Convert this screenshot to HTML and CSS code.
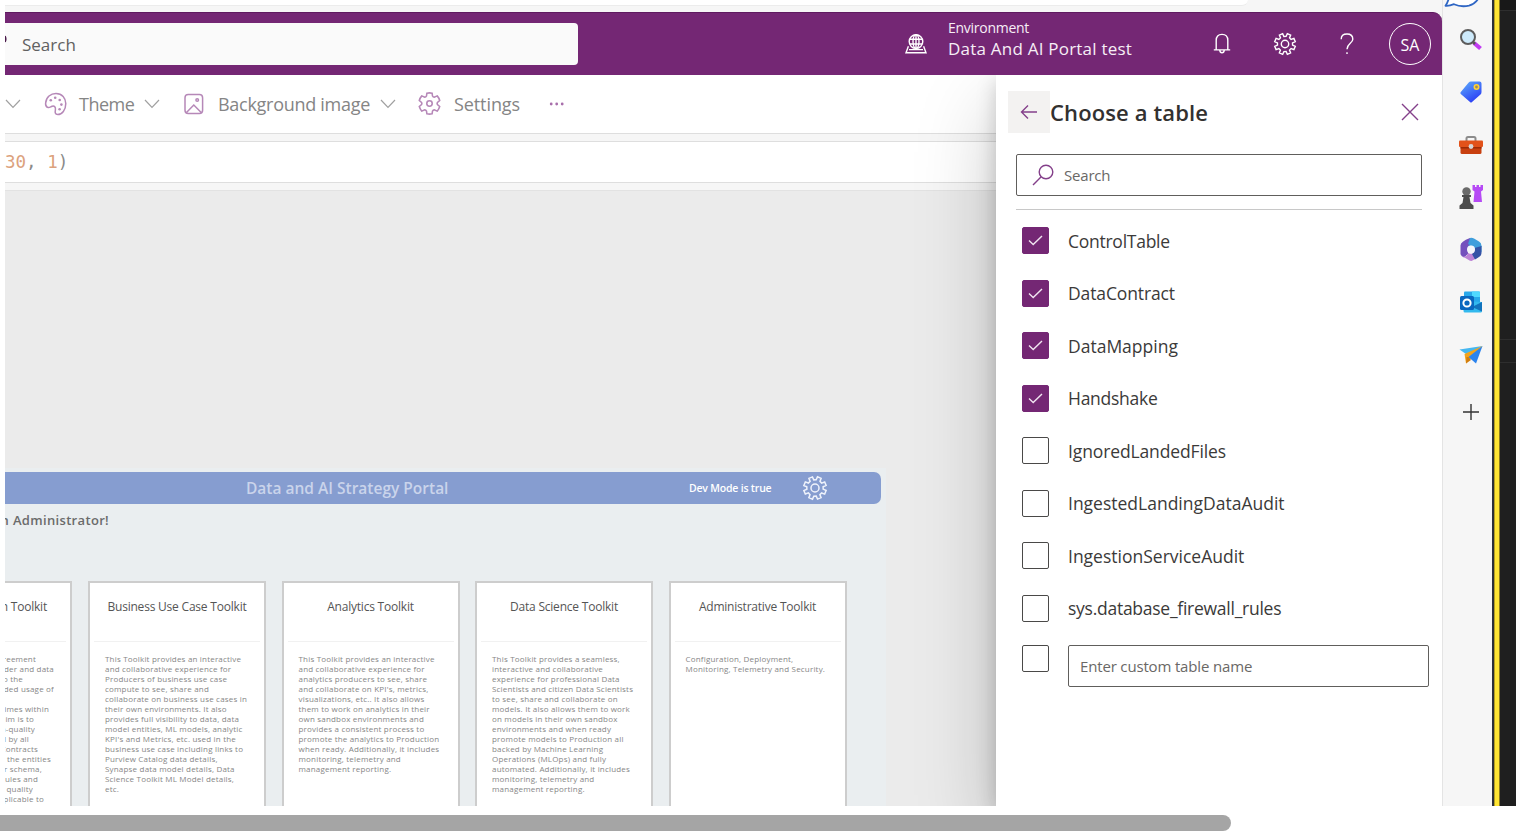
FILE: index.html
```html
<!DOCTYPE html>
<html lang="en">
<head>
<meta charset="utf-8">
<title>Power Apps</title>
<link rel="stylesheet" href="styles.css">
</head>
<body>
<svg class="defs" aria-hidden="true">
  <symbol id="gear8" viewBox="-12 -12 24 24"><g transform="rotate(22.5)"><path d="M7.4-1.9L10.4-1.8V1.8L7.4 1.9L6.5 3.9L8.6 6.1L6.1 8.6L3.9 6.5L1.9 7.4L1.8 10.4H-1.8L-1.9 7.4L-3.9 6.5L-6.1 8.6L-8.6 6.1L-6.5 3.9L-7.4 1.9L-10.4 1.8V-1.8L-7.4-1.9L-6.5-3.9L-8.6-6.1L-6.1-8.6L-3.9-6.5L-1.9-7.4L-1.8-10.4H1.8L1.9-7.4L3.9-6.5L6.1-8.6L8.6-6.1L6.5-3.9Z"/></g><circle r="3.7"/></symbol>
  <symbol id="gear6" viewBox="-12 -12 24 24"><path d="M9.8 2.9L7.6 1Q7 0 7.6-1L9.8-2.9Q9.1-5.4 7.4-7.3L4.6-6.1Q3.4-6.1 2.9-7.2L2.5-9.9Q0-10.5-2.5-9.9L-2.9-7.2Q-3.4-6.1-4.6-6.1L-7.4-7.3Q-9.1-5.4-9.8-2.9L-7.6-1Q-7 0-7.6 1L-9.8 2.9Q-9.1 5.4-7.4 7.3L-4.6 6.1Q-3.4 6.1-2.9 7.2L-2.5 9.9Q0 10.5 2.5 9.9L2.9 7.2Q3.4 6.1 4.6 6.1L7.4 7.3Q9.1 5.4 9.8 2.9Z"/><circle r="2.6"/></symbol>
  <symbol id="chev" viewBox="0 0 16 10"><path d="M1 1L8 8.3L15 1"/></symbol>
</svg>

<div class="stage">
  <div class="page">
    <div class="browser-bar"><div class="address"></div></div>
    <header class="topbar">
      <div class="global-search">
        <svg class="lens-edge" width="5" height="14" viewBox="0 0 5 14"><path d="M0 1Q1.5 4 0 7" /></svg>
        <span>Search</span>
      </div>
      <div class="environment">
        <svg class="line-icon" width="22" height="20" viewBox="0 0 22 20"><circle cx="11" cy="7.6" r="6.8"/><ellipse cx="11" cy="7.6" rx="3" ry="6.8"/><path d="M4.8 5.2H17.2M4.8 10H17.2M11 .8V14.4M3.4 12.2L1 18.8H21L18.6 12.2M4 15.6H18"/></svg>
        <div class="env-text"><span class="env-label">Environment</span><span class="env-name">Data And AI Portal test</span></div>
      </div>
      <div class="top-actions">
        <svg class="line-icon" width="18" height="22" viewBox="0 0 18 22"><path d="M3.2 16.8V7.4Q3.2 1.4 9 1.4T14.8 7.4V16.8M.8 16.9H17.2M6.8 17.4Q7 19.8 9 19.8T11.2 17.4"/></svg>
        <svg class="line-icon gear" width="24" height="24"><use href="#gear8"/></svg>
        <svg class="line-icon" width="14" height="22" viewBox="0 0 14 22"><path d="M1.2 6.2Q1.2 1 7 1T12.8 6.2C12.8 10.2 7 10.6 7 16.2M7 19.2V21"/></svg>
        <div class="avatar">SA</div>
      </div>
    </header>

    <div class="workspace">
      <main class="studio">
        <div class="toolbar">
          <svg class="chev" width="16" height="10"><use href="#chev"/></svg>
          <svg class="tool-icon palette" width="23" height="24" viewBox="0 0 23 24"><path d="M1.6 11.2C2 5 6.800 1.400 12 1.400C18 1.400 21.800 6 21.800 11.600C21.800 18 18 22.600 13.800 22.600C10.800 22.600 11 20 11.400 17.800C11.800 15.400 10.400 13.400 8.200 14.200C5.600 15.400 5.200 16 3.600 15.400C1.800 14.600 1.500 12.800 1.600 11.200Z"/><g class="dots"><circle cx="6.800" cy="8.200" r="1.300"/><circle cx="11.200" cy="5.700" r="1.300"/><circle cx="15.700" cy="8" r="1.300"/><circle cx="17.400" cy="12.600" r="1.300"/><circle cx="15.600" cy="17.200" r="1.300"/></g></svg>
          <span class="tool t-theme">Theme</span>
          <svg class="chev" width="16" height="10"><use href="#chev"/></svg>
          <svg class="tool-icon picture" width="20" height="22" viewBox="0 0 20 22"><rect x="1" y="1.500" width="17.600" height="19" rx="3.200"/><path d="M2.500 19.500L9.800 12L17.200 19.500"/><circle cx="13.200" cy="7" r="1.300"/></svg>
          <span class="tool t-bg">Background image</span>
          <svg class="chev" width="16" height="10"><use href="#chev"/></svg>
          <svg class="tool-icon cog" width="25" height="25"><use href="#gear6"/></svg>
          <span class="tool t-set">Settings</span>
          <svg class="more" width="16" height="4" viewBox="0 0 16 4"><circle cx="2.200" cy="2" r="1.400"/><circle cx="7.700" cy="2" r="1.400"/><circle cx="13.200" cy="2" r="1.400"/></svg>
        </div>
        <div class="formula"><span class="num">30</span>, <span class="num">1</span>)</div>
        <div class="canvas">
          <div class="app">
            <div class="app-bar">
              <span class="app-title">Data and AI Strategy Portal</span>
              <span class="dev-mode">Dev Mode is true</span>
              <svg class="app-gear" width="26" height="26"><use href="#gear8"/></svg>
            </div>
            <div class="welcome"><span>n Administrator!</span></div>
            <div class="cards">
              <article class="card first">
                <h3>n Toolkit</h3>
                <div class="cut">
                  <span style="width:31px">reement</span><span style="width:49px">der and data</span><span style="width:18px">o the</span><span style="width:49px">ded usage of</span><span style="width:0">&nbsp;</span><span style="width:44px">imes within</span><span style="width:29px">im is to</span><span style="width:30px">n-quality</span><span style="width:24px">l by all</span><span style="width:33px">Contracts</span><span style="width:46px">the entities</span><span style="width:37px">r schema,</span><span style="width:33px">rules and</span><span style="width:28px">quality</span><span style="width:39px">plicable to</span>
                </div>
              </article>
              <article class="card">
                <h3>Business Use Case Toolkit</h3>
                <p>This Toolkit provides an interactive<br>and collaborative experience for<br>Producers of business use case<br>compute to see, share and<br>collaborate on business use cases in<br>their own environments. It also<br>provides full visibility to data, data<br>model entities, ML models, analytic<br>KPI's and Metrics, etc. used in the<br>business use case including links to<br>Purview Catalog data details,<br>Synapse data model details, Data<br>Science Toolkit ML Model details,<br>etc.</p>
              </article>
              <article class="card">
                <h3>Analytics Toolkit</h3>
                <p>This Toolkit provides an interactive<br>and collaborative experience for<br>analytics producers to see, share<br>and collaborate on KPI's, metrics,<br>visualizations, etc.. It also allows<br>them to work on analytics in their<br>own sandbox environments and<br>provides a consistent process to<br>promote the analytics to Production<br>when ready. Additionally, it includes<br>monitoring, telemetry and<br>management reporting.</p>
              </article>
              <article class="card">
                <h3>Data Science Toolkit</h3>
                <p>This Toolkit provides a seamless,<br>interactive and collaborative<br>experience for professional Data<br>Scientists and citizen Data Scientists<br>to see, share and collaborate on<br>models. It also allows them to work<br>on models in their own sandbox<br>environments and when ready<br>promote models to Production all<br>backed by Machine Learning<br>Operations (MLOps) and fully<br>automated. Additionally, it includes<br>monitoring, telemetry and<br>management reporting.</p>
              </article>
              <article class="card">
                <h3>Administrative Toolkit</h3>
                <p>Configuration, Deployment,<br>Monitoring, Telemetry and Security.</p>
              </article>
            </div>
          </div>
        </div>
      </main>

      <aside class="panel">
        <div class="panel-head">
          <button class="back" aria-label="Back"><svg width="18" height="16" viewBox="0 0 18 16"><path d="M17 8H1.500M8 1.500L1.500 8L8 14.500"/></svg></button>
          <h2>Choose a table</h2>
          <svg class="close" width="18" height="18" viewBox="0 0 18 18"><path d="M1 1L17 17M17 1L1 17"/></svg>
        </div>
        <div class="table-search">
          <svg width="22" height="22" viewBox="0 0 22 22"><circle cx="14" cy="8" r="6.800"/><path d="M9.200 12.800L1 21"/></svg>
          <span>Search</span>
        </div>
        <ul class="tables">
          <li><i class="box on"><svg width="15" height="11" viewBox="0 0 15 11"><path d="M1 5.500L5.200 9.500L14 1"/></svg></i><span class="tight">ControlTable</span></li>
          <li><i class="box on"><svg width="15" height="11" viewBox="0 0 15 11"><path d="M1 5.500L5.200 9.500L14 1"/></svg></i><span class="snug">DataContract</span></li>
          <li><i class="box on"><svg width="15" height="11" viewBox="0 0 15 11"><path d="M1 5.500L5.200 9.500L14 1"/></svg></i><span>DataMapping</span></li>
          <li><i class="box on"><svg width="15" height="11" viewBox="0 0 15 11"><path d="M1 5.500L5.200 9.500L14 1"/></svg></i><span class="tight">Handshake</span></li>
          <li><i class="box"></i><span class="snug">IgnoredLandedFiles</span></li>
          <li><i class="box"></i><span>IngestedLandingDataAudit</span></li>
          <li><i class="box"></i><span>IngestionServiceAudit</span></li>
          <li><i class="box"></i><span class="tight">sys.database_firewall_rules</span></li>
          <li class="custom"><i class="box"></i><div class="custom-name">Enter custom table name</div></li>
        </ul>
      </aside>
    </div>
  </div>

  <nav class="sidebar">
    <div class="cell bubble"><svg width="38" height="9" viewBox="0 0 38 9"><path d="M6 -2Q4.500 3 2.500 5.800Q6 6.200 11 4.200Q18 7.400 26 5.600Q32 4 35-1" fill="#fff" stroke="#2f66c4" stroke-width="1.800" stroke-linejoin="round"/></svg></div>
    <div class="cell"><svg width="24" height="24" viewBox="0 0 24 24"><path d="M15 15L21.500 20.500" stroke="#c13bf2" stroke-width="4.200"/><path d="M13.500 13.500L16 16" stroke="#555" stroke-width="2.500"/><circle cx="9" cy="9" r="7" fill="#cdeafb" stroke="#5c5c5c" stroke-width="2"/></svg></div>
    <div class="cell"><svg width="24" height="24" viewBox="0 0 24 24"><defs><linearGradient id="tag" x1="0" y1="0" x2=".6" y2="1"><stop offset="0" stop-color="#5fb0fb"/><stop offset="1" stop-color="#2b3ff5"/></linearGradient></defs><path d="M12 1.500H20.500Q22.500 1.500 22.500 3.500V12Q22.500 13.500 21.500 14.500L13 22Q12 23 11 22L1.800 14Q.8 13 1.800 12L9.500 2.800Q10.500 1.500 12 1.500Z" fill="url(#tag)"/><circle cx="17.500" cy="7" r="2.200" fill="#9d8a60" stroke="#ffd335" stroke-width="1.600"/></svg></div>
    <div class="cell low"><svg width="26" height="20" viewBox="0 0 26 20"><path d="M8.500 6V3.500Q8.500 2 10 2H16Q17.500 2 17.500 3.500V6" fill="none" stroke="#8b8b8b" stroke-width="2"/><rect x="2.500" y="9" width="21" height="10" rx="1.500" fill="#c8400f"/><rect x="1" y="5.500" width="24" height="6.500" rx="1" fill="#e2521a"/><rect x="2.500" y="12" width="21" height="1.500" fill="#9c2b06"/><circle cx="13" cy="11.500" r="2.400" fill="#d6d6d6"/></svg></div>
    <div class="cell"><svg width="26" height="26" viewBox="0 0 26 26"><path d="M14.500 1V6L16.500 7.500L15.500 18H24L23 7.500L25 6V1H22.500V3H21V1H18.500V3H17V1Z" fill="#b64af5"/><circle cx="8.500" cy="7.500" r="4.200" fill="#6a6a6a"/><path d="M4 11H13V13H11.500L12.500 19L15.500 21.500V25H1.500V21.500L4.500 19L5.500 13H4Z" fill="#4c4c4c"/></svg></div>
    <div class="cell"><svg width="24" height="25" viewBox="0 0 24 25"><path d="M11 1.500L20 5.500Q22.500 7 22.500 10V15L15.500 12Q15.500 8.500 12 8.500L5 12Z" fill="#35a5dc"/><path d="M11 1Q1.500 4.500 1.500 8.500V17Q2 19 5 20.500L9 17V9L15 6V2.500Q13 .5 11 1Z" fill="#7450bd"/><path d="M11 1Q13 .5 15 1.600L20 4.600Q22.500 6 22.500 9V10L15.500 11Q14 8.500 12 8.500L9 7Z" fill="#3f9fdc"/><path d="M3 19Q8 21 9 16Q12 17.500 15 16L19 20.500L13 23.700Q12 24.200 10.500 23.600Z" fill="#bd83d6"/><path d="M15.500 11L22.500 9V16Q22.500 18.500 20 20L16 22.500L13 17Q16 15 15.500 11Z" fill="#3453a6"/><circle cx="12" cy="12.500" r="4" fill="#f4f6fb"/></svg></div>
    <div class="cell"><svg width="24" height="24" viewBox="0 0 24 24"><path d="M5 2.500Q5 1.500 6 1.500H20Q21 1.500 21 2.500V12H5Z" fill="#28a8ea"/><path d="M13 1.500H20Q21 1.500 21 2.500V7H13Z" fill="#50d9ff"/><path d="M4.500 11L23 12V21Q23 22.500 21.500 22.500H6Q4.500 22.500 4.500 21Z" fill="#32b9ee"/><path d="M23 12V21.500L13 17Z" fill="#1173bd"/><rect x="1" y="6" width="14" height="14" rx="1.500" fill="#0a67bf"/><circle cx="8" cy="13" r="3.600" fill="none" stroke="#fff" stroke-width="2"/></svg></div>
    <div class="cell"><svg width="24" height="20" viewBox="0 0 24 20"><path d="M.5 4.500L23.500 1L8.500 10Z" fill="#45b7f0"/><path d="M5.500 9L23.500 1L7 18.500Z" fill="#f2a31b"/><path d="M9.500 12L23.500 1L17 18.500Z" fill="#2b84ee"/><path d="M7.500 12L9.500 12L12 15L7 18.500Z" fill="#d17d0d"/></svg></div>
    <div class="cell plus"><svg width="16" height="16" viewBox="0 0 16 16"><path d="M8 0V16M0 8H16" stroke="#333" stroke-width="1.400"/></svg></div>
  </nav>
  <div class="frame"></div>
  <div class="desktop"><div class="d-top"></div><div class="d-mid"></div><div class="d-band"></div></div>
</div>
<div class="scrollbar"></div>
</body>
</html>
```
FILE: styles.css
```css
* { box-sizing: border-box; }
body {
  margin: 0;
  width: 1516px;
  height: 833px;
  overflow: hidden;
  background: #fff;
  font-family: "Open Sans", "Noto Sans", sans-serif;
  white-space: nowrap;
}
svg { display: block; flex: none; }
.defs { position: absolute; width: 0; height: 0; }
h2, h3, p, ul { margin: 0; padding: 0; }

.stage { display: flex; height: 806px; margin-left: 5px; overflow: hidden; }
.page { display: flex; flex-direction: column; width: 1437px; flex: none; background: #f6f6f6; }

.browser-bar { height: 12px; flex: none; }
.address { width: 1243px; height: 6px; background: #fff; border-bottom: 1px solid #ececec; border-radius: 0 0 14px 0; }

.topbar {
  display: flex;
  align-items: center;
  height: 63px;
  flex: none;
  background: #742774;
  border-top: 1px solid #5f1a60;
  border-radius: 0 9px 0 0;
  color: #fff;
}
.global-search {
  display: flex;
  align-items: center;
  width: 573px;
  height: 42px;
  flex: none;
  background: #fafafa;
  border-radius: 0 4px 4px 0;
  color: #616161;
  font-size: 17px;
}
.global-search span { margin-left: 12px; }
.lens-edge { fill: none; stroke: #4a1a4a; stroke-width: 1.6; margin-top: -4px; }
.line-icon { fill: none; stroke: #fff; stroke-width: 1.4; }
.environment { display: flex; align-items: center; flex: none; margin-left: 327px; width: 240px; }
.env-text { display: flex; flex-direction: column; margin: -10px 0 0 21px; }
.env-label { font-size: 14px; line-height: 20px; letter-spacing: -.27px; }
.env-name { font-size: 17px; line-height: 22px; letter-spacing: .22px; }
.env-text span { color: #f6eef6; }
.top-actions { display: flex; align-items: center; flex: none; margin-left: 67.500px; }
.top-actions .gear { margin: 0 43.500px 0 42px; }
.avatar {
  width: 42px;
  height: 42px;
  margin-left: 35px;
  border: 1px solid #fff;
  border-radius: 50%;
  font-size: 16px;
  line-height: 43px;
  text-align: center;
}

.workspace { display: flex; flex: 1; overflow: hidden; }
.studio { display: flex; flex-direction: column; width: 991px; flex: none; background: #f6f6f6; }
.toolbar {
  display: flex;
  align-items: center;
  height: 58.500px;
  flex: none;
  background: #fff;
  border-bottom: 1px solid #dedede;
  color: #858585;
  font-size: 18px;
}
.chev { fill: none; stroke: #a0a0a0; stroke-width: 1.2; }
.tool-icon { fill: none; stroke: #b688b8; stroke-width: 1.5; }
.tool-icon .dots { fill: #b688b8; stroke: none; }
.palette { margin-left: 23px; }
.picture { margin-left: 24px; }
.cog { margin-left: 21px; }
.tool { margin-left: 12px; }
.t-theme { width: 65px; letter-spacing: -.5px; }
.t-bg { margin-left: 14px; width: 162px; letter-spacing: -.28px; }
.t-set { margin-left: 12px; width: 95px; letter-spacing: -.09px; }
.more { fill: #a86fab; }
.formula {
  height: 42.500px;
  flex: none;
  margin-top: 7px;
  background: #fff;
  border: solid #dedede;
  border-width: 1px 0;
  font: 17.500px/41px "DejaVu Sans Mono", monospace;
  color: #8a8a8a;
}
.num { color: #dca27d; }
.canvas { display: flex; flex: 1; min-height: 0; margin-top: 6.500px; padding-top: 277px; background: #ebebeb; border-top: 1px solid #e2e2e2; }
.app { width: 881px; background: #eaeef0; padding-top: 4.500px; display: flex; flex-direction: column; overflow: hidden; }
.app-bar {
  display: flex;
  align-items: center;
  width: 876px;
  height: 31.500px;
  flex: none;
  background: #869dd0;
  border-radius: 0 7px 7px 0;
}
.app-title { width: 443px; margin-left: 241px; font-size: 15.500px; color: #cad4eb; font-weight: 600; }
.dev-mode { width: 113px; font-size: 10.500px; letter-spacing: -.2px; font-weight: 600; color: #fff; }
.app-gear { fill: none; stroke: #eef2fb; stroke-width: 1.4; }
.welcome { display: flex; justify-content: flex-end; flex: none; width: 104px; height: 77px; font-size: 13px; line-height: 32px; font-weight: 600; letter-spacing: .33px; color: #6b6b6b; }
.cards { display: flex; gap: 15.500px; flex: 1; min-height: 0; }
.card { width: 178px; height: 300px; flex: none; border: 2px solid #cdcdcd; background: #fff; }
.card h3 {
  height: 59px;
  margin: 0 4px;
  border-bottom: 1px solid #f1f1f1;
  font-size: 12px;
  line-height: 47px;
  font-weight: 400;
  letter-spacing: -.21px;
  text-align: center;
  color: #555;
}
.card p, .cut { padding: 12px 0 0 15px; font-size: 8px; line-height: 10.030px; letter-spacing: .19px; color: #868686; }
.first { width: 67px; margin-right: .500px; border-left: 0; }
.first h3 { display: flex; justify-content: flex-end; margin-left: 0; padding-right: 19px; }
.cut { display: flex; flex-direction: column; padding-left: 0; }
.cut span { display: flex; justify-content: flex-end; overflow: hidden; height: 10.030px; }

.panel {
  position: relative;
  width: 446px;
  flex: none;
  background: #fff;
  box-shadow: 0 33px 75px rgba(0, 0, 0, .22), 0 6px 19px rgba(0, 0, 0, .18);
  color: #3b3a39;
}
.panel-head { display: flex; align-items: center; height: 42px; margin: 16px 23px 0 12px; }
.back { width: 42px; height: 42px; padding: 0; border: 0; background: #f3f2f1; display: grid; place-items: center; }
.back svg, .close, .table-search svg { fill: none; stroke: #84408a; stroke-width: 1.4; }
.panel h2 { flex: 1; font-size: 22px; line-height: 42px; font-weight: 600; letter-spacing: .12px; color: #323130; }
.table-search {
  display: flex;
  align-items: center;
  height: 42px;
  margin: 21px 20px 0;
  padding-left: 15px;
  border: 1px solid #605e5c;
  border-radius: 2px;
  font-size: 15px;
  letter-spacing: -.2px;
  color: #6a6866;
}
.table-search svg { margin-right: 10px; }
.tables { list-style: none; margin: 13px 20px 0; padding-top: 4.500px; border-top: 1px solid #c8c8c8; }
.tables li { display: flex; align-items: center; height: 52.500px; padding-left: 6px; font-size: 17.500px; }
.box { width: 27px; height: 27px; flex: none; margin-right: 19px; border: 1.500px solid #4a4948; border-radius: 2px; display: grid; place-items: center; }
.box.on { background: #742774; border-color: #742774; }
.box svg { fill: none; stroke: #f0e4f0; stroke-width: 1.4; }
.snug { letter-spacing: -.12px; }
.tight { letter-spacing: -.26px; }
.tables .custom { align-items: flex-start; margin: 10px -7px 0 0; height: 42px; }
.custom-name { flex: 1; height: 42px; padding-left: 11px; border: 1px solid #605e5c; border-radius: 2px; font-size: 15px; line-height: 41px; letter-spacing: -.16px; color: #6a6866; }

.sidebar { width: 49.500px; flex: none; background: #f6f6f6; border-left: 1px solid #e4e4e4; display: flex; flex-direction: column; }
.cell { display: grid; place-items: center; height: 52.500px; padding: 2px 0 0 7px; flex: none; }
.bubble { height: 12.500px; place-items: start; padding: 0; }
.low { padding-top: 3px; }
.plus { padding-top: 12px; }
.frame { width: 8.500px; flex: none; background: linear-gradient(90deg, #2c2f38 0 2.500px, #b59f22 2.500px 3.500px, #ffe534 3.500px 7.500px, #8a7a20 7.500px); }
.desktop { flex: 1; display: flex; flex-direction: column; background: #1f1f1f; }
.d-top { height: 11px; background: #181818; border-bottom: 1px solid #2e2e2e; }
.d-mid { height: 328px; }
.d-band { height: 24px; border: solid #2e2e2e; border-width: 1px 0; }

.scrollbar { width: 1231px; height: 16px; margin-top: 9px; background: #a5a5a5; border-radius: 0 8px 8px 0; }
```
